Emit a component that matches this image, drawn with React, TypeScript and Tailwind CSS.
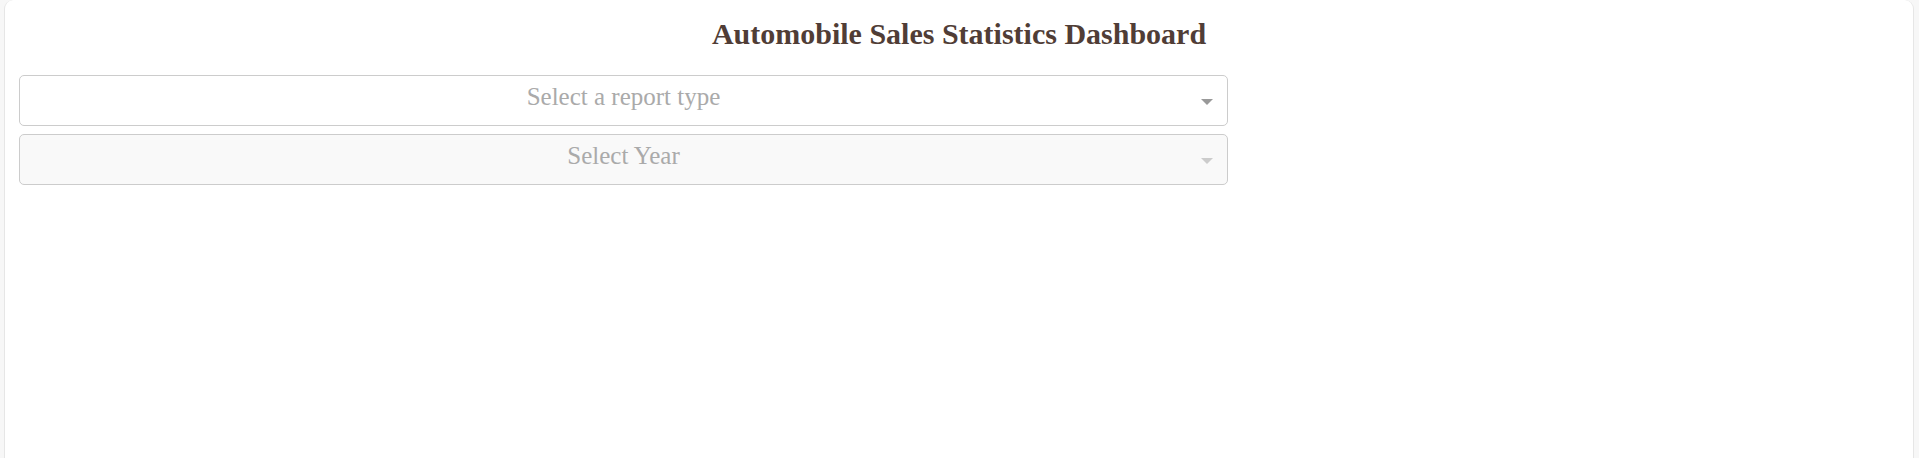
import React from 'react';

interface SelectProps {
	placeholder: string;
	disabled?: boolean;
}

function Select({ placeholder, disabled }: SelectProps) {
	return (
		<div
			className={`relative flex h-[51px] w-[1209px] rounded-[5px] border border-[#cccccc] pl-[40px] ${
				disabled ? 'bg-[#f9f9f9]' : 'bg-white'
			}`}
		>
			<div className="flex-1 text-center text-[25px] leading-[42px] text-[#aaaaaa]">{placeholder}</div>
			<div className="flex w-[40px] items-center justify-center pt-[3px]">
				<span
					className={`h-0 w-0 border-x-[6px] border-t-[6px] border-x-transparent ${
						disabled ? 'border-t-[#cccccc]' : 'border-t-[#999999]'
					}`}
				/>
			</div>
		</div>
	);
}

export default function App() {
	return (
		<div
			className="h-[458px] overflow-hidden bg-[#f7f7f7] pl-[4px] pr-[5px]"
			style={{ fontFamily: '"Liberation Serif", "Times New Roman", serif' }}
		>
			<div className="h-[480px] rounded-[9px] border-x border-[#e6e6e6] bg-white px-[14px] pt-[17px]">
				<h1 className="text-center text-[30px] font-bold leading-[34px] text-[#503D36]">
					Automobile Sales Statistics Dashboard
				</h1>
				<div className="mt-[24px] flex flex-col gap-[8px]">
					<Select placeholder="Select a report type" />
					<Select placeholder="Select Year" disabled />
				</div>
			</div>
		</div>
	);
}
